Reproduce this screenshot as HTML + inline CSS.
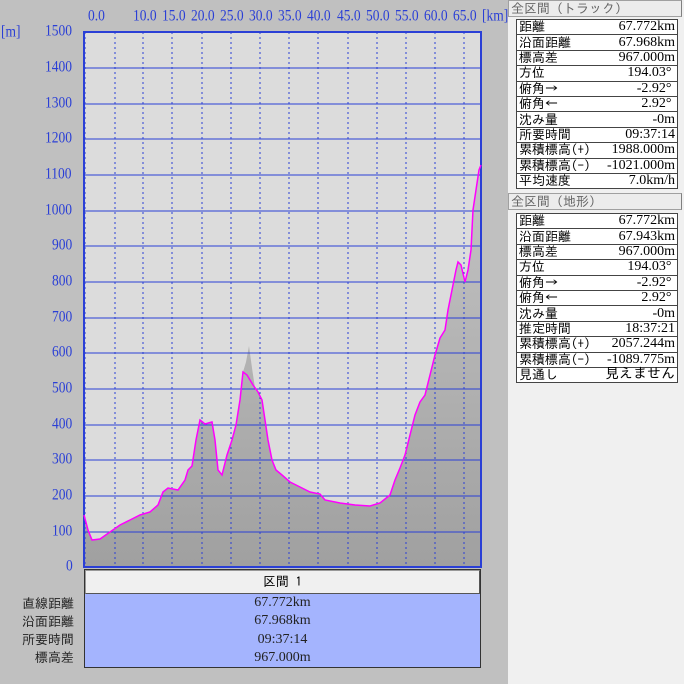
<!DOCTYPE html>
<html><head><meta charset="utf-8"><style>
*{margin:0;padding:0;box-sizing:border-box}
body{width:684px;height:684px;background:#c0c0c0;position:relative;overflow:hidden;font-family:"IPAGothic","Noto Sans CJK JP",monospace;font-size:13px;color:#000}
.ax{position:absolute;color:#2a3fd6;font-size:13.5px;font-family:"Liberation Serif","IPAGothic",serif;transform:scaleY(1.15)}
#rp{position:absolute;left:508px;top:0;width:176px;height:684px;background:#f0f0f0}
.hd{position:absolute;left:0;width:174px;height:17px;background:#ececec;border:1px solid #a0a0a0;border-right-color:#808080;color:#666;padding-left:2px;line-height:15px;font-size:13px}
table{position:absolute;left:8px;width:162px;border-collapse:collapse;background:#fff;font-size:13px;border:1px solid #444}
td{border-top:1px solid #444;border-bottom:1px solid #444;height:15.4px;line-height:14px;padding:0 2px;white-space:nowrap}
td.r{text-align:right;font-family:"Liberation Serif","IPAGothic",serif;font-size:14px}
#bt{position:absolute;left:84px;top:569px;width:397px;height:99px;border:1px solid #333;background:#a4b4fe}
#bt .h{height:24px;background:#f0f0f0;border:1px solid #999;border-right-color:#555;border-bottom-color:#555;text-align:center;line-height:22px;font-size:13px}
#bt .v{height:18.3px;text-align:center;line-height:18px;color:#222;font-family:"Liberation Serif","IPAGothic",serif;font-size:14px}
.lb{position:absolute;right:610px;color:#222;font-size:13px;line-height:18px;text-align:right;width:80px}
</style></head><body>
<svg width="508" height="684" style="position:absolute;left:0;top:0">
<defs><linearGradient id="g" x1="0" y1="0" x2="0" y2="1"><stop offset="0" stop-color="#c4c4c4"/><stop offset="1" stop-color="#a0a0a0"/></linearGradient></defs>
<rect x="84" y="32" width="397" height="535" fill="#dcdcdc"/>
<polygon fill="url(#g)" points="84,567 84,515 88,530 92,540 100,539 110,532 120,525 130,520 140,515 150,512 158,505 163,492 168,488 178,490 185,480 188,470 192,466 196,440 200,420 205,424 212,422 215,440 218,470 222,475 227,455 232,440 236,425 240,400 243,372 246,362 249,346 252,368 255,388 258,392 262,400 265,420 268,440 272,460 276,470 282,475 290,482 300,487 310,492 320,494 325,500 340,503 355,505 370,506 380,503 390,495 395,480 400,468 405,455 410,435 415,415 420,402 425,395 430,375 435,355 440,338 445,330 448,310 452,290 456,270 458,262 461,265 465,282 468,270 471,250 473,210 476,190 479,170 481,165 481,567"/>
<g stroke="#2a3fd6" stroke-width="1">
<line x1="84" y1="68" x2="481" y2="68"/><line x1="84" y1="104" x2="481" y2="104"/><line x1="84" y1="139" x2="481" y2="139"/><line x1="84" y1="175" x2="481" y2="175"/><line x1="84" y1="211" x2="481" y2="211"/><line x1="84" y1="246" x2="481" y2="246"/><line x1="84" y1="282" x2="481" y2="282"/><line x1="84" y1="318" x2="481" y2="318"/><line x1="84" y1="353" x2="481" y2="353"/><line x1="84" y1="389" x2="481" y2="389"/><line x1="84" y1="425" x2="481" y2="425"/><line x1="84" y1="460" x2="481" y2="460"/><line x1="84" y1="496" x2="481" y2="496"/><line x1="84" y1="532" x2="481" y2="532"/>
</g>
<g stroke="#2a3fd6" stroke-width="1" stroke-dasharray="2,3">
<line x1="115" y1="32" x2="115" y2="567"/><line x1="143" y1="32" x2="143" y2="567"/><line x1="172" y1="32" x2="172" y2="567"/><line x1="202" y1="32" x2="202" y2="567"/><line x1="231" y1="32" x2="231" y2="567"/><line x1="260" y1="32" x2="260" y2="567"/><line x1="289" y1="32" x2="289" y2="567"/><line x1="318" y1="32" x2="318" y2="567"/><line x1="348" y1="32" x2="348" y2="567"/><line x1="377" y1="32" x2="377" y2="567"/><line x1="406" y1="32" x2="406" y2="567"/><line x1="435" y1="32" x2="435" y2="567"/><line x1="464" y1="32" x2="464" y2="567"/><line x1="85" y1="32" x2="85" y2="567"/>
</g>
<rect x="84" y="32" width="397" height="535" fill="none" stroke="#2a3fd6" stroke-width="2"/>
<polyline fill="none" stroke="#ff00ff" stroke-width="1.5" points="84,515 88,530 92,540 100,539 110,532 120,525 130,520 140,515 150,512 158,505 163,492 168,488 178,490 185,480 188,470 192,466 196,440 200,420 205,424 212,422 215,440 218,470 222,475 227,455 232,440 236,425 240,400 243,372 247,375 253,385 258,392 262,400 265,420 268,440 272,460 276,470 282,475 290,482 300,487 310,492 320,494 325,500 340,503 355,505 370,506 380,503 390,495 395,480 400,468 405,455 410,435 415,415 420,402 425,395 430,375 435,355 440,338 445,330 448,310 452,290 456,270 458,262 461,265 465,282 468,270 471,250 473,210 476,190 479,170 481,165"/>
</svg>
<div class="ax" style="left:1px;top:24px">[m]</div>
<div class="ax" style="left:45px;top:23px">1500</div>
<div class="ax" style="left:45px;top:59px">1400</div>
<div class="ax" style="left:45px;top:95px">1300</div>
<div class="ax" style="left:45px;top:130px">1200</div>
<div class="ax" style="left:45px;top:166px">1100</div>
<div class="ax" style="left:45px;top:202px">1000</div>
<div class="ax" style="left:52px;top:237px">900</div>
<div class="ax" style="left:52px;top:273px">800</div>
<div class="ax" style="left:52px;top:309px">700</div>
<div class="ax" style="left:52px;top:344px">600</div>
<div class="ax" style="left:52px;top:380px">500</div>
<div class="ax" style="left:52px;top:416px">400</div>
<div class="ax" style="left:52px;top:451px">300</div>
<div class="ax" style="left:52px;top:487px">200</div>
<div class="ax" style="left:52px;top:523px">100</div>
<div class="ax" style="left:66px;top:558px">0</div>
<div class="ax" style="left:88px;top:8px">0.0</div>
<div class="ax" style="left:133px;top:8px">10.0</div>
<div class="ax" style="left:162px;top:8px">15.0</div>
<div class="ax" style="left:191px;top:8px">20.0</div>
<div class="ax" style="left:220px;top:8px">25.0</div>
<div class="ax" style="left:249px;top:8px">30.0</div>
<div class="ax" style="left:278px;top:8px">35.0</div>
<div class="ax" style="left:307px;top:8px">40.0</div>
<div class="ax" style="left:337px;top:8px">45.0</div>
<div class="ax" style="left:366px;top:8px">50.0</div>
<div class="ax" style="left:395px;top:8px">55.0</div>
<div class="ax" style="left:424px;top:8px">60.0</div>
<div class="ax" style="left:453px;top:8px">65.0</div>
<div class="ax" style="left:482px;top:8px">[km]</div>

<div id="bt"><div class="h">区間 1</div>
<div class="v">67.772km</div><div class="v">67.968km</div><div class="v">09:37:14</div><div class="v">967.000m</div></div>
<div class="lb" style="top:595px">直線距離</div>
<div class="lb" style="top:613px">沿面距離</div>
<div class="lb" style="top:631px">所要時間</div>
<div class="lb" style="top:649px">標高差</div>

<div id="rp">
<div class="hd" style="top:0">全区間 (トラック)</div>
<table style="top:19px">
<tr><td>距離</td><td class="r">67.772km</td></tr>
<tr><td>沿面距離</td><td class="r">67.968km</td></tr>
<tr><td>標高差</td><td class="r">967.000m</td></tr>
<tr><td>方位</td><td class="r">194.03°&nbsp;</td></tr>
<tr><td>俯角→</td><td class="r">-2.92°&nbsp;</td></tr>
<tr><td>俯角←</td><td class="r">2.92°&nbsp;</td></tr>
<tr><td>沈み量</td><td class="r">-0m</td></tr>
<tr><td>所要時間</td><td class="r">09:37:14</td></tr>
<tr><td>累積標高(+)</td><td class="r">1988.000m</td></tr>
<tr><td>累積標高(-)</td><td class="r">-1021.000m</td></tr>
<tr><td>平均速度</td><td class="r">7.0km/h</td></tr>
</table>
<div class="hd" style="top:193px">全区間 (地形)</div>
<table style="top:213px">
<tr><td>距離</td><td class="r">67.772km</td></tr>
<tr><td>沿面距離</td><td class="r">67.943km</td></tr>
<tr><td>標高差</td><td class="r">967.000m</td></tr>
<tr><td>方位</td><td class="r">194.03°&nbsp;</td></tr>
<tr><td>俯角→</td><td class="r">-2.92°&nbsp;</td></tr>
<tr><td>俯角←</td><td class="r">2.92°&nbsp;</td></tr>
<tr><td>沈み量</td><td class="r">-0m</td></tr>
<tr><td>推定時間</td><td class="r">18:37:21</td></tr>
<tr><td>累積標高(+)</td><td class="r">2057.244m</td></tr>
<tr><td>累積標高(-)</td><td class="r">-1089.775m</td></tr>
<tr><td>見通し</td><td class="r">見えません</td></tr>
</table>
</div>
</body></html>
